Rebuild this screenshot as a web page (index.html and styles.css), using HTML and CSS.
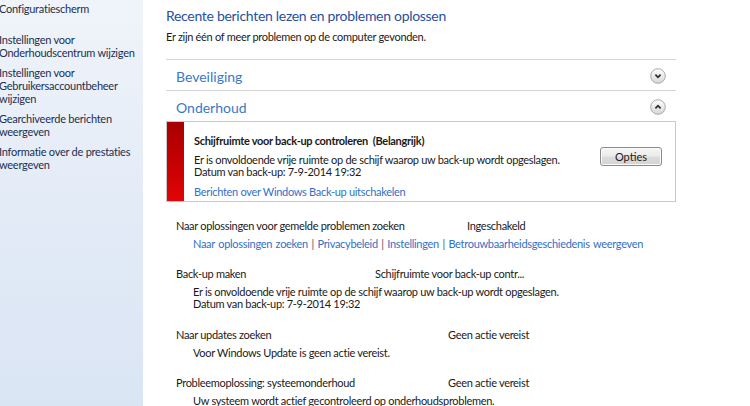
FILE: index.html
```html
<!DOCTYPE html>
<html lang="nl">
<head>
    <meta charset="UTF-8">
    <title>Onderhoudscentrum</title>
    <link rel="stylesheet" href="styles.css">
</head>
<body>

<div class="window">
    <nav class="sidebar">
        <a class="side-home" href="#">Configuratiescherm</a>
        <a href="#">Instellingen voor Onderhoudscentrum wijzigen</a>
        <a href="#">Instellingen voor Gebruikersaccountbeheer wijzigen</a>
        <a href="#">Gearchiveerde berichten weergeven</a>
        <a href="#">Informatie over de prestaties weergeven</a>
    </nav>

    <main class="content">
        <h1>Recente berichten lezen en problemen oplossen</h1>
        <p class="intro">Er zijn één of meer problemen op de computer gevonden.</p>

        <div class="section">
            <div class="section-head">
                <span>Beveiliging</span>
                <button class="chevron" aria-label="Uitvouwen">
                    <svg width="16" height="16" viewBox="0 0 16 16">
                        <defs>
                            <linearGradient id="chev-bg" x1="0" y1="0" x2="0" y2="1">
                                <stop offset="0" stop-color="#ffffff"/>
                                <stop offset="1" stop-color="#d6d6d6"/>
                            </linearGradient>
                        </defs>
                        <circle cx="8" cy="8" r="7.3" fill="url(#chev-bg)" stroke="#a0a0a0" stroke-width="0.9"/>
                        <path d="M5.4 6.7 L8 9.3 L10.6 6.7" fill="none" stroke="#2b2b2b" stroke-width="1.7"/>
                    </svg>
                </button>
            </div>
        </div>

        <div class="section">
            <div class="section-head open">
                <span>Onderhoud</span>
                <button class="chevron" aria-label="Samenvouwen">
                    <svg width="16" height="16" viewBox="0 0 16 16">
                        <circle cx="8" cy="8" r="7.3" fill="url(#chev-bg)" stroke="#a0a0a0" stroke-width="0.9"/>
                        <path d="M5.4 9.3 L8 6.7 L10.6 9.3" fill="none" stroke="#2b2b2b" stroke-width="1.7"/>
                    </svg>
                </button>
            </div>

            <div class="alert">
                <div class="alert-bar"></div>
                <div class="alert-body">
                    <div class="alert-text">
                        <strong>Schijfruimte voor back-up controleren &nbsp;(Belangrijk)</strong>
                        <p>Er is onvoldoende vrije ruimte op de schijf waarop uw back-up wordt opgeslagen.<br>
                        Datum van back-up: 7-9-2014 19:32</p>
                        <a href="#">Berichten over Windows Back-up uitschakelen</a>
                    </div>
                    <button class="btn">Opties</button>
                </div>
            </div>

            <div class="item">
                <div class="item-row w-wide">
                    <span>Naar oplossingen voor gemelde problemen zoeken</span>
                    <span>Ingeschakeld</span>
                </div>
                <div class="item-detail links">
                    <a href="#">Naar oplossingen zoeken</a> |
                    <a href="#">Privacybeleid</a> |
                    <a href="#">Instellingen</a> |
                    <a href="#">Betrouwbaarheidsgeschiedenis weergeven</a>
                </div>
            </div>

            <div class="item">
                <div class="item-row w-narrow">
                    <span>Back-up maken</span>
                    <span>Schijfruimte voor back-up contr...</span>
                </div>
                <div class="item-detail">
                    Er is onvoldoende vrije ruimte op de schijf waarop uw back-up wordt opgeslagen.<br>
                    Datum van back-up: 7-9-2014 19:32
                </div>
            </div>

            <div class="item">
                <div class="item-row w-mid">
                    <span>Naar updates zoeken</span>
                    <span>Geen actie vereist</span>
                </div>
                <div class="item-detail">Voor Windows Update is geen actie vereist.</div>
            </div>

            <div class="item">
                <div class="item-row w-mid">
                    <span>Probleemoplossing: systeemonderhoud</span>
                    <span>Geen actie vereist</span>
                </div>
                <div class="item-detail">Uw systeem wordt actief gecontroleerd op onderhoudsproblemen.</div>
            </div>
        </div>
    </main>
</div>

</body>
</html>
```

FILE: styles.css
```css
body {
    margin: 0;
    font-family: Lato, "Noto Sans", Arial, sans-serif;
    font-size: 11px;
    letter-spacing: -0.3px;
    color: #1a1a1a;
    background-color: #ffffff;
    overflow: hidden;
}
a {
    color: #3370c6;
    text-decoration: none;
}
.window {
    display: flex;
    height: 406px;
}
.sidebar {
    width: 143px;
    flex-shrink: 0;
    display: flex;
    flex-direction: column;
    gap: 7px;
    padding: 2px 0 0 0;
    background: linear-gradient(180deg, #f0f4fa 0%, #e3ebf7 50%, #dae5f4 100%);
    box-sizing: border-box;
}
.sidebar a {
    display: block;
    color: #1c2f4f;
    font-size: 11px;
    letter-spacing: -0.25px;
    line-height: 13px;
    margin-left: -1px;
    padding-right: 4px;
}
.sidebar .side-home {
    margin-bottom: 11px;
}
.content {
    flex: 1;
    padding: 5px 0 0 23px;
}
h1 {
    margin: 0;
    font-size: 14px;
    font-weight: normal;
    color: #27509e;
    line-height: 21px;
}
.intro {
    margin: 3px 0 15px;
    line-height: 15px;
}
.section {
    width: 510px;
}
.section-head {
    display: flex;
    align-items: center;
    justify-content: space-between;
    height: 31px;
    border-top: 1px solid #d5d5d5;
    padding: 3px 10px 0 10px;
    box-sizing: border-box;
    font-size: 14px;
    letter-spacing: 0;
    color: #3a78c8;
}
.chevron {
    border: none;
    background: none;
    padding: 0;
    width: 16px;
    height: 16px;
    display: block;
    margin-top: -2px;
}
.alert {
    display: flex;
    border: 1px solid #c9c9c9;
    height: 81px;
    box-sizing: border-box;
}
.alert-bar {
    width: 17px;
    background: linear-gradient(180deg, #a80000 0%, #c80000 55%, #e00505 100%);
}
.alert-body {
    flex: 1;
    display: flex;
    align-items: flex-start;
    justify-content: space-between;
    padding: 12px 13px 0 10px;
}
.alert-text strong {
    display: block;
    line-height: 14px;
}
.alert-text p {
    margin: 6px 0 7px;
    line-height: 12px;
}
.alert-text a {
    line-height: 12px;
}
.btn {
    margin-top: 13px;
    width: 62px;
    height: 19px;
    padding: 0;
    font-family: inherit;
    font-size: 11px;
    letter-spacing: 0;
    color: #1a1a1a;
    border: 1px solid #8a8a8a;
    border-radius: 3px;
    background: linear-gradient(180deg, #f6f6f6 0%, #ebebeb 48%, #dddddd 52%, #d2d2d2 100%);
    box-shadow: inset 0 0 0 1px #fbfbfb;
}
.item {
    padding: 0 0 0 10px;
    margin-top: 18.5px;
}
.alert + .item {
    margin-top: 17.5px;
}
.item-row {
    display: grid;
    line-height: 12px;
}
.w-wide { grid-template-columns: 291px auto; }
.w-mid { grid-template-columns: 272px auto; }
.w-narrow { grid-template-columns: 199px auto; }
.item-detail {
    padding-left: 17px;
    margin-top: 6px;
    line-height: 12px;
}
.links {
    color: #555;
    word-spacing: 1px;
}
```
